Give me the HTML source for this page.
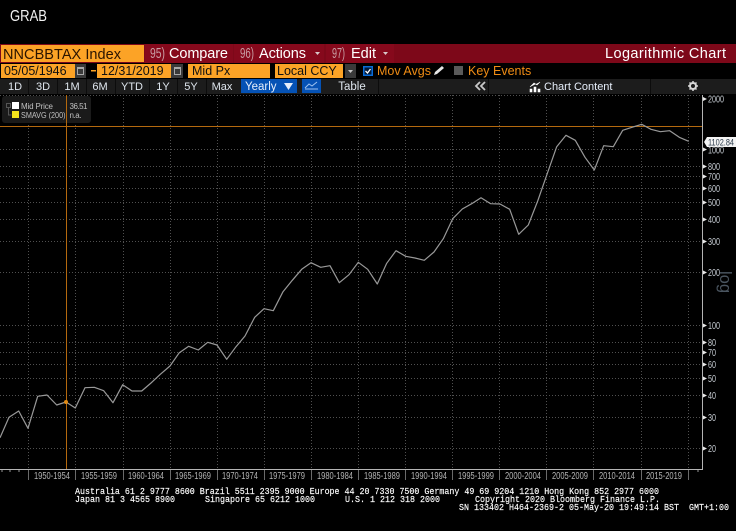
<!DOCTYPE html>
<html><head><meta charset="utf-8"><style>
html,body{margin:0;padding:0;background:#000;width:736px;height:531px;overflow:hidden}
svg{display:block}
text{font-family:"Liberation Sans",sans-serif;white-space:pre}
.m{font-family:"Liberation Mono",monospace;font-size:9.2px;fill:#fff;stroke:#fff;stroke-width:.15}
.t{font-size:11px;fill:#dfe6ee;text-anchor:middle}
.x{font-size:10px;fill:#b4b4b4;text-anchor:middle}
.y{font-size:10px;fill:#c4cad0}
.g{stroke:#505050;stroke-width:1;stroke-dasharray:1 2;fill:none}
.b{font-size:12.5px;fill:#111}
</style></head><body>
<svg width="736" height="531" viewBox="0 0 736 531" xmlns="http://www.w3.org/2000/svg">
<rect width="736" height="531" fill="#000"/>
<text x="10" y="21" font-size="16" fill="#f2f2f2" textLength="37" lengthAdjust="spacingAndGlyphs">GRAB</text>

<!-- red bar -->
<rect x="0" y="44" width="736" height="19" fill="#7d0819"/>
<rect x="1" y="45" width="143" height="17" fill="#fca326"/>
<rect x="145" y="44" width="88" height="19" fill="#86091c"/>
<rect x="234" y="44" width="90" height="19" fill="#86091c"/>
<rect x="326" y="44" width="68" height="19" fill="#86091c"/>
<text x="3" y="59" font-size="14.5" fill="#2a1400" textLength="118">NNCBBTAX Index</text>
<text x="150" y="58" font-size="14.5" fill="#c9a0a6" textLength="15" lengthAdjust="spacingAndGlyphs">95)</text>
<text x="169" y="58" font-size="14.5" fill="#fff" textLength="59">Compare</text>
<text x="240" y="58" font-size="14.5" fill="#c9a0a6" textLength="14" lengthAdjust="spacingAndGlyphs">96)</text>
<text x="259" y="58" font-size="14.5" fill="#fff" textLength="47">Actions</text>
<path d="M315 52h5l-2.500 3z" fill="#d8c8ca"/>
<text x="332" y="58" font-size="14.5" fill="#c9a0a6" textLength="13" lengthAdjust="spacingAndGlyphs">97)</text>
<text x="351" y="58" font-size="14.5" fill="#fff">Edit</text>
<path d="M383 52h5l-2.500 3z" fill="#d8c8ca"/>
<text x="605" y="58" font-size="14.5" fill="#fff" textLength="121">Logarithmic Chart</text>

<!-- row 2 -->
<rect x="1" y="64" width="74" height="14" fill="#fca326"/>
<rect x="75" y="64" width="11" height="14" fill="#3a3a3a"/>
<rect x="77.5" y="67.5" width="6" height="7" fill="none" stroke="#a8a8a8"/>
<rect x="77.5" y="67" width="6" height="2" fill="#a8a8a8"/>
<rect x="91" y="70" width="5" height="1.500" fill="#fca326"/>
<rect x="97" y="64" width="74" height="14" fill="#fca326"/>
<rect x="171" y="64" width="12" height="14" fill="#3a3a3a"/>
<rect x="174.5" y="67.5" width="6" height="7" fill="none" stroke="#a8a8a8"/>
<rect x="174.5" y="67" width="6" height="2" fill="#a8a8a8"/>
<rect x="188" y="64" width="82" height="14" fill="#fca326"/>
<rect x="275" y="64" width="68" height="14" fill="#fca326"/>
<rect x="345" y="64" width="11" height="14" fill="#3a3a3a"/>
<path d="M348 70h5l-2.500 3z" fill="#c8c8c8"/>
<text x="4" y="75" class="b">05/05/1946</text>
<text x="101" y="75" class="b">12/31/2019</text>
<text x="192" y="75" class="b">Mid Px</text>
<text x="277" y="75" class="b">Local CCY</text>
<rect x="363" y="66" width="10" height="10" fill="#0a6cd8"/>
<rect x="364.500" y="67.500" width="7" height="7" fill="#021a3a"/>
<path d="M365.500 71l2 2 3-4" stroke="#fff" stroke-width="1.300" fill="none"/>
<text x="377" y="75" font-size="12.500" fill="#f08c14">Mov Avgs</text>
<path d="M434 75l1-3 7-6 2 2-7 6z" fill="#e6e6e6"/>
<rect x="454" y="66" width="9" height="9" fill="#5a5a5a"/>
<text x="468" y="75" font-size="12.500" fill="#f08c14">Key Events</text>

<!-- row 3 -->
<rect x="0" y="79" width="736" height="15" fill="#1c1c1c"/>
<path d="M28.500 79v15M57.500 79v15M86.500 79v15M115.500 79v15M149.500 79v15M177.500 79v15M206.500 79v15M378.500 79v15M488.500 79v15M650.500 79v15" stroke="#0c0c0c"/>
<text x="15" y="90" class="t">1D</text>
<text x="43" y="90" class="t">3D</text>
<text x="72" y="90" class="t">1M</text>
<text x="100" y="90" class="t">6M</text>
<text x="132" y="90" class="t">YTD</text>
<text x="163" y="90" class="t">1Y</text>
<text x="191" y="90" class="t">5Y</text>
<text x="222" y="90" class="t">Max</text>
<rect x="241" y="79" width="56" height="14" fill="#0552b5"/>
<text x="245" y="90" font-size="11.500" fill="#e6eefa">Yearly</text>
<path d="M284 83h9l-4.500 7z" fill="#e6eefa"/>
<rect x="302" y="79" width="19" height="14" fill="#0552b5"/>
<path d="M305 89h13M305 88l4-4 3 2 5-4" stroke="#9fc3f0" fill="none"/>
<text x="352" y="90" class="t" style="font-size:11.500px">Table</text>
<path d="M480 82l-4 4 4 4M485 82l-4 4 4 4" stroke="#c8c8c8" stroke-width="1.800" fill="none"/>
<path d="M530 92v-3h2v3zM534 92v-5h2v5zM538 92v-3h2v3zM530 87l4-4 3 2 3-3" fill="#fff" stroke="#fff" stroke-width=".6"/>
<text x="544" y="90" font-size="11" fill="#e6eefa">Chart Content</text>
<circle cx="693" cy="86" r="3" fill="none" stroke="#d8d8d8" stroke-width="2"/>
<path d="M693 81v2M693 89v2M688 86h2M696 86h2M689.500 82.500l1.500 1.500M695 88l1.500 1.500M696.500 82.500l-1.500 1.500M691 88l-1.500 1.500" stroke="#d8d8d8" stroke-width="1.500"/>

<!-- grid -->
<path class="g" d="M0 95.500H702M0 149.500H702M0 166.500H702M0 176.500H702M0 188.500H702M0 202.500H702M0 219.500H702M0 241.500H702M0 272.500H702M0 325.500H702M0 342.500H702M0 352.500H702M0 364.500H702M0 378.500H702M0 395.500H702M0 417.500H702M0 448.500H702"/>
<path class="g" d="M28.500 95V470M75.500 95V470M123.500 95V470M170.500 95V470M217.500 95V470M264.500 95V470M311.500 95V470M358.500 95V470M405.500 95V470M452.500 95V470M499.500 95V470M546.500 95V470M593.500 95V470M641.500 95V470M688.500 95V470"/>

<!-- orange cursors -->
<path d="M0 126.500H702.500M66.500 95V470" stroke="#b4690e" stroke-width="1" fill="none"/>

<!-- line -->
<polyline fill="none" stroke="#999" stroke-width="1.200" stroke-linejoin="round" points="0,437.700 9,417.300 18.700,411 28,428.300 37.700,396.300 47,395 56.700,405 66,402 75.300,408 85,387.700 94.300,387.300 103.700,390.700 113,402.700 122.700,384.700 132,391 141.700,391 151,383 160.300,374.300 170,366 179.300,352.700 188.700,346.300 198.300,350 207.700,342.300 217,345 226.700,359.300 236,346.700 245,336 254.700,317.300 264,308.700 273.300,310.700 283,291.700 292.300,280.300 301.700,269.300 311,262.700 320.700,267.300 330,265.700 339.300,282.700 349,274.700 358.300,262.300 367.700,269.300 377.300,284 386.700,263.300 396,250.700 405.700,256.300 415,258 424.300,260.300 434,252 443.300,238.700 452.700,218.700 462.300,209 471.700,203.700 481,197.700 490.700,203.700 500,204 509.700,209.300 518.700,234.300 528.300,225 537.700,201 547,174.300 556.700,146.700 566,135.300 575.300,140.300 585,157.300 594.300,170 603.700,145.700 613.300,146.700 622.700,130.300 632,127.300 641.700,124.300 651,129.300 660.300,131.700 669.700,130.700 679.300,137.300 688.700,141.300"/>
<circle cx="66" cy="402" r="2" fill="#e08a14"/>

<!-- legend -->
<rect x="2" y="96" width="89" height="27" rx="3" fill="#1a1a1a"/>
<rect x="12" y="102" width="7" height="7" fill="#fff"/>
<rect x="12" y="111" width="7" height="7" fill="#f4e21c"/>
<path d="M8.500 108v7h3" stroke="#555" fill="none"/>
<rect x="6.500" y="103.500" width="4" height="4" fill="none" stroke="#555"/>
<text x="21" y="109" font-size="8" fill="#c0c0c0" textLength="32">Mid Price</text>
<text x="21" y="118" font-size="8" fill="#c0c0c0" textLength="44.500" lengthAdjust="spacingAndGlyphs">SMAVG (200)</text>
<text x="69.500" y="109" font-size="8" fill="#c0c0c0" textLength="18">36.51</text>
<text x="69.500" y="118" font-size="8" fill="#c0c0c0" textLength="12">n.a.</text>
<!-- orange over legend -->
<path d="M66.500 95V123" stroke="#b4690e"/>

<!-- axes -->
<path d="M702.500 95V470M0 469.500H703" stroke="#b4b4b4" fill="none"/>
<path d="M28.500 470v10M75.500 470v10M123.500 470v10M170.500 470v10M217.500 470v10M264.500 470v10M311.500 470v10M358.500 470v10M405.500 470v10M452.500 470v10M499.500 470v10M546.500 470v10M593.500 470v10M641.500 470v10M688.500 470v10" stroke="#6a6a6a"/>
<path d="M2 470v2M10 470v2M19 470v2M698 470v2" stroke="#999"/>
<path d="M703 97l4 2-4 2zM703 147.500l4 2-4 2zM703 164.500l4 2-4 2zM703 174.500l4 2-4 2zM703 186.500l4 2-4 2zM703 200.500l4 2-4 2zM703 217.500l4 2-4 2zM703 239.500l4 2-4 2zM703 270.500l4 2-4 2zM703 323.500l4 2-4 2zM703 340.500l4 2-4 2zM703 350.500l4 2-4 2zM703 362.500l4 2-4 2zM703 376.500l4 2-4 2zM703 393.500l4 2-4 2zM703 415.500l4 2-4 2zM703 446.500l4 2-4 2z" fill="#e8e8e8"/>
<path d="M707 137h29v10h-29l-3-5z" fill="#f4f4f4"/>
<text x="708" y="145.500" font-size="9.600" fill="#2a3a4a" textLength="26" lengthAdjust="spacingAndGlyphs">1102.84</text>
<text x="708" y="102.500" class="y" textLength="16" lengthAdjust="spacingAndGlyphs">2000</text>
<text x="708" y="153.500" class="y" textLength="16" lengthAdjust="spacingAndGlyphs">1000</text>
<text x="708" y="170" class="y" textLength="12" lengthAdjust="spacingAndGlyphs">800</text>
<text x="708" y="180" class="y" textLength="12" lengthAdjust="spacingAndGlyphs">700</text>
<text x="708" y="192" class="y" textLength="12" lengthAdjust="spacingAndGlyphs">600</text>
<text x="708" y="206" class="y" textLength="12" lengthAdjust="spacingAndGlyphs">500</text>
<text x="708" y="223" class="y" textLength="12" lengthAdjust="spacingAndGlyphs">400</text>
<text x="708" y="245" class="y" textLength="12" lengthAdjust="spacingAndGlyphs">300</text>
<text x="708" y="276" class="y" textLength="12" lengthAdjust="spacingAndGlyphs">200</text>
<text x="708" y="329" class="y" textLength="12" lengthAdjust="spacingAndGlyphs">100</text>
<text x="708" y="346" class="y" textLength="8" lengthAdjust="spacingAndGlyphs">80</text>
<text x="708" y="356" class="y" textLength="8" lengthAdjust="spacingAndGlyphs">70</text>
<text x="708" y="368" class="y" textLength="8" lengthAdjust="spacingAndGlyphs">60</text>
<text x="708" y="382" class="y" textLength="8" lengthAdjust="spacingAndGlyphs">50</text>
<text x="708" y="399" class="y" textLength="8" lengthAdjust="spacingAndGlyphs">40</text>
<text x="708" y="421" class="y" textLength="8" lengthAdjust="spacingAndGlyphs">30</text>
<text x="708" y="452" class="y" textLength="8" lengthAdjust="spacingAndGlyphs">20</text>
<text transform="translate(720 271) rotate(90)" font-size="16.500" fill="#4a5560">log</text>

<text x="52" y="479" class="x" textLength="36" lengthAdjust="spacingAndGlyphs">1950-1954</text>
<text x="99" y="479" class="x" textLength="36" lengthAdjust="spacingAndGlyphs">1955-1959</text>
<text x="146" y="479" class="x" textLength="36" lengthAdjust="spacingAndGlyphs">1960-1964</text>
<text x="193" y="479" class="x" textLength="36" lengthAdjust="spacingAndGlyphs">1965-1969</text>
<text x="240" y="479" class="x" textLength="36" lengthAdjust="spacingAndGlyphs">1970-1974</text>
<text x="287" y="479" class="x" textLength="36" lengthAdjust="spacingAndGlyphs">1975-1979</text>
<text x="335" y="479" class="x" textLength="36" lengthAdjust="spacingAndGlyphs">1980-1984</text>
<text x="382" y="479" class="x" textLength="36" lengthAdjust="spacingAndGlyphs">1985-1989</text>
<text x="429" y="479" class="x" textLength="36" lengthAdjust="spacingAndGlyphs">1990-1994</text>
<text x="476" y="479" class="x" textLength="36" lengthAdjust="spacingAndGlyphs">1995-1999</text>
<text x="523" y="479" class="x" textLength="36" lengthAdjust="spacingAndGlyphs">2000-2004</text>
<text x="570" y="479" class="x" textLength="36" lengthAdjust="spacingAndGlyphs">2005-2009</text>
<text x="617" y="479" class="x" textLength="36" lengthAdjust="spacingAndGlyphs">2010-2014</text>
<text x="664" y="479" class="x" textLength="36" lengthAdjust="spacingAndGlyphs">2015-2019</text>

<!-- footer -->
<text x="75" y="494" class="m" textLength="584" lengthAdjust="spacingAndGlyphs">Australia 61 2 9777 8600 Brazil 5511 2395 9000 Europe 44 20 7330 7500 Germany 49 69 9204 1210 Hong Kong 852 2977 6000</text>
<text x="75" y="502" class="m" textLength="585" lengthAdjust="spacingAndGlyphs">Japan 81 3 4565 8900      Singapore 65 6212 1000      U.S. 1 212 318 2000       Copyright 2020 Bloomberg Finance L.P.</text>
<text x="459" y="510" class="m" textLength="270" lengthAdjust="spacingAndGlyphs">SN 133402 H464-2369-2 05-May-20 19:49:14 BST  GMT+1:00</text>
</svg>
</body></html>
